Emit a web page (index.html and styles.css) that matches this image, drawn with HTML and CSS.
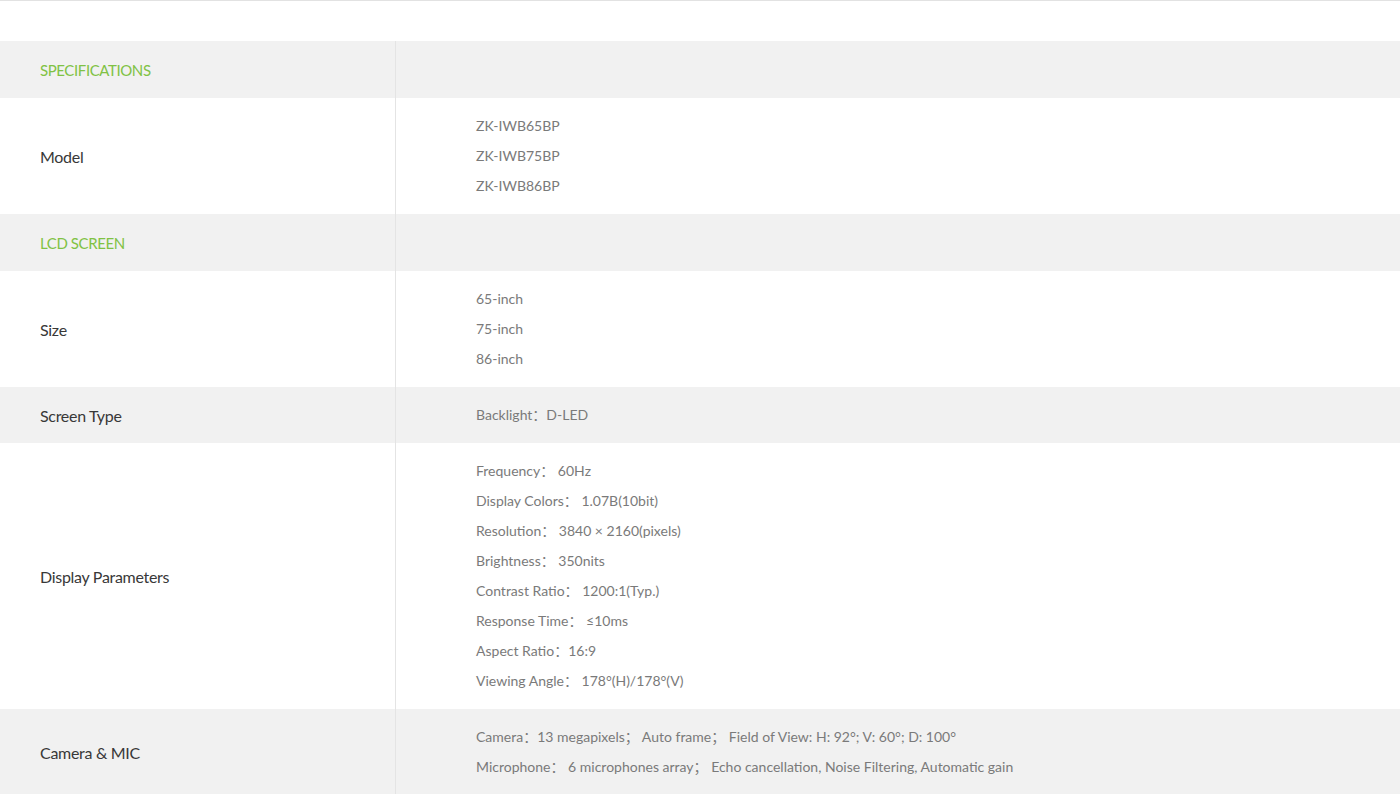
FILE: index.html
```html
<!DOCTYPE html>
<html lang="en">
<head>
    <meta charset="UTF-8">
    <title>Specifications</title>
    <link rel="stylesheet" href="styles.css">
</head>
<body>

    <div class="top-line"></div>

    <table class="spec-table">
        <tbody>
            <tr class="section">
                <td class="label">SPECIFICATIONS</td>
                <td class="value"></td>
            </tr>
            <tr>
                <td class="label">Model</td>
                <td class="value">
                    <p>ZK-IWB65BP</p>
                    <p>ZK-IWB75BP</p>
                    <p>ZK-IWB86BP</p>
                </td>
            </tr>
            <tr class="section">
                <td class="label">LCD SCREEN</td>
                <td class="value"></td>
            </tr>
            <tr>
                <td class="label">Size</td>
                <td class="value">
                    <p>65-inch</p>
                    <p>75-inch</p>
                    <p>86-inch</p>
                </td>
            </tr>
            <tr class="shaded">
                <td class="label">Screen Type</td>
                <td class="value">
                    <p>Backlight：D-LED</p>
                </td>
            </tr>
            <tr>
                <td class="label">Display Parameters</td>
                <td class="value">
                    <p>Frequency： 60Hz</p>
                    <p>Display Colors： 1.07B(10bit)</p>
                    <p>Resolution：&nbsp;3840 × 2160(pixels)</p>
                    <p>Brightness：&nbsp;350nits</p>
                    <p>Contrast Ratio： 1200:1(Typ.)</p>
                    <p>Response Time：&nbsp;≤10ms</p>
                    <p>Aspect Ratio：16:9</p>
                    <p>Viewing Angle：&nbsp;178°(H)/178°(V)</p>
                </td>
            </tr>
            <tr class="shaded">
                <td class="label">Camera &amp; MIC</td>
                <td class="value">
                    <p>Camera：13 megapixels；&nbsp;Auto frame；&nbsp;Field of View: H: 92°; V: 60°; D: 100°</p>
                    <p>Microphone： 6 microphones array；&nbsp;Echo cancellation, Noise Filtering, Automatic gain</p>
                </td>
            </tr>
        </tbody>
    </table>

</body>
</html>
```

FILE: styles.css
```css
body {
    margin: 0;
    font-family: Lato, "Noto Sans CJK SC", sans-serif;
    background-color: #fff;
    color: #333;
}

.top-line {
    height: 1px;
    background-color: #e2e2e2;
    margin-bottom: 40px;
}

/* Spec table */
.spec-table {
    width: 100%;
    border-collapse: collapse;
}

.spec-table td {
    padding: 13px 0;
    vertical-align: middle;
}

.spec-table .label {
    width: 355px;
    padding-left: 40px;
    border-right: 1px solid #e4e4e4;
    font-size: 16px;
    color: #383838;
    letter-spacing: -0.3px;
}

.spec-table .value {
    padding-left: 80px;
    font-size: 14px;
    color: #7a7a7a;
}

.spec-table .value p {
    margin: 0;
    line-height: 30px;
}

.section,
.shaded {
    background-color: #f1f1f1;
}

.section td {
    height: 31px;
}

.section .label {
    color: #80c244;
    font-size: 15px;
    letter-spacing: -0.4px;
}
```
